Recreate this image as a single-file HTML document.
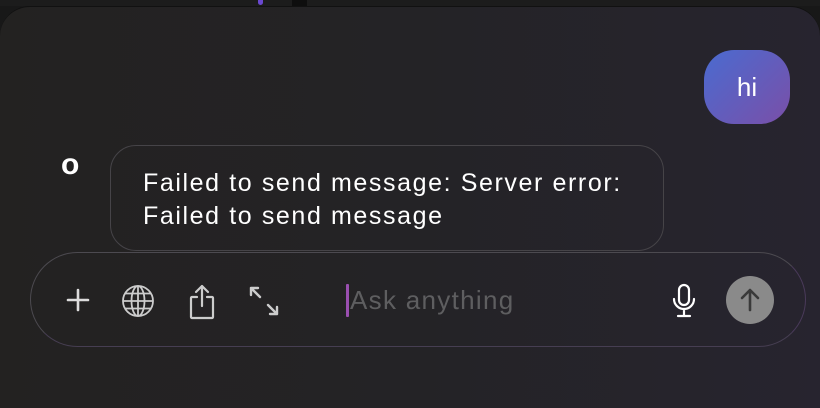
<!DOCTYPE html>
<html><head><style>
html,body{margin:0;padding:0;width:820px;height:408px;overflow:hidden;background:#181818;font-family:"Liberation Sans",sans-serif;position:relative}
.top{position:absolute;left:0;top:0;width:820px;height:6px;background:#1c1c1c}
.panel{position:absolute;left:0;top:6px;width:820px;height:402px;border-radius:30px 30px 0 0;background:linear-gradient(90deg,#232221 0%,#242326 50%,#27242f 100%);border-top:1px solid #111;box-sizing:border-box}
.hi{position:absolute;left:704px;top:50px;width:86px;height:74px;border-radius:30px;background:linear-gradient(135deg,#4a6bd0,#7a4fa8);color:#fff;font-size:26px;line-height:74px;text-align:center}
.o{position:absolute;left:61px;top:149px;color:#fff;font-weight:bold;font-size:30px;line-height:32px}
.err{position:absolute;left:110px;top:145px;width:554px;height:106px;box-sizing:border-box;border:1.5px solid #464448;border-radius:26px;color:#fff;font-size:25px;letter-spacing:1.6px;line-height:33px;padding:21px 0 0 32px;white-space:nowrap}
.inp{position:absolute;left:30px;top:252px;width:776px;height:95px;box-sizing:border-box;border:1.5px solid #4c4a50;border-right-color:#4a3a5a;border-bottom-color:#463e52;border-radius:48px}
.ph{position:absolute;left:350px;top:285px;font-size:26px;letter-spacing:1.3px;color:#5e5e60}
.cur{position:absolute;left:346px;top:284px;width:3px;height:33px;background:#9a4fb0;border-radius:1px}
.send{position:absolute;left:726px;top:276px;width:48px;height:48px;border-radius:50%;background:#8a8a8a}
svg{position:absolute}
</style></head><body>
<div class="top"></div>
<div style="position:absolute;left:258px;top:0;width:5px;height:5px;background:#6a48d0;border-radius:0 0 3px 3px"></div>
<div style="position:absolute;left:292px;top:0;width:15px;height:6px;background:#0e0e0e"></div>
<div class="panel"></div>
<div class="hi">hi</div>
<div class="o">o</div>
<div class="err">Failed to send message: Server error:<br>Failed to send message</div>
<div class="inp"></div>
<svg style="left:64px;top:286px" width="28" height="28" viewBox="0 0 28 28"><path d="M14 4v20M4 14h20" stroke="#ddd" stroke-width="2.6" stroke-linecap="round"/></svg>
<svg style="left:121px;top:284px" width="34" height="34" viewBox="0 0 34 34" fill="none" stroke="#ccc" stroke-width="1.8"><circle cx="17" cy="17" r="15"/><ellipse cx="17" cy="17" rx="6.5" ry="15"/><path d="M17 2v30M2 17h30M4.5 9.5h25M4.5 24.5h25"/></svg>
<svg style="left:185px;top:282px" width="34" height="40" viewBox="0 0 34 40" fill="none" stroke="#ccc" stroke-width="2.2" stroke-linecap="round" stroke-linejoin="round"><path d="M17 4v20M11 10l6-6 6 6"/><path d="M12 15H7a1 1 0 0 0-1 1v19a1 1 0 0 0 1 1h20a1 1 0 0 0 1-1V16a1 1 0 0 0-1-1h-5"/></svg>
<svg style="left:247px;top:284px" width="34" height="34" viewBox="0 0 34 34" fill="none" stroke="#ccc" stroke-width="2.4" stroke-linecap="round" stroke-linejoin="round"><path d="M4 4l9 9M4 4v7M4 4h7M30 30l-9-9M30 30v-7M30 30h-7"/></svg>
<div class="cur"></div>
<div class="ph">Ask anything</div>
<svg style="left:670px;top:283px" width="28" height="36" viewBox="0 0 28 36" fill="none" stroke="#fff" stroke-width="2.2" stroke-linecap="round"><rect x="9" y="2" width="10" height="20" rx="5"/><path d="M4 16a10 10 0 0 0 20 0M14 26v6M8 33h12"/></svg>
<div class="send"></div>
<svg style="left:736px;top:286px" width="28" height="28" viewBox="0 0 28 28" fill="none" stroke="#3a3a3a" stroke-width="2.6" stroke-linecap="round" stroke-linejoin="round"><path d="M14 24V4M6 12l8-8 8 8"/></svg>
</body></html>
